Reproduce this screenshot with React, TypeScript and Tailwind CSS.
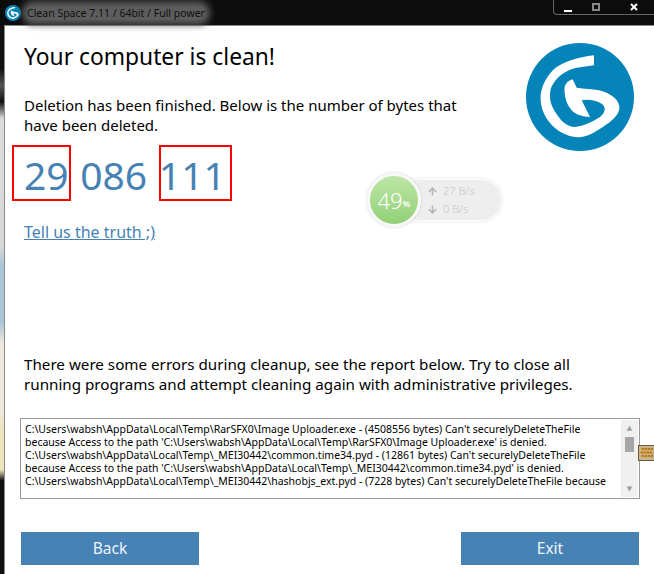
import { ArrowDown, ArrowUp } from "lucide-react";

const font = "font-['Noto_Sans','DejaVu_Sans',sans-serif]";

function Logo({ className }: { className: string }) {
  return (
    <svg viewBox="0 0 108 108" className={className}>
      <circle cx="54" cy="54" r="54" fill="#0484b8" />
      <path
        d="M68 12.3 C52 14 36 19 27 27 C18 37 14 47 14.7 57 C15 68 21 78 29 85 C36 91 46 95 55.7 94 C64 93 74 86 84 79 C90 74 94 69 93.3 63 C92 55 83 50 74 47.5 C66 45.5 58 46 50.7 44.7 L46.7 36.3 C41 38 38 42 38.5 48 C39 57 42 63 45.7 67.3 C50 72 57 74 64 74 L55.7 57.3 C62 56 70 57 75.7 60.7 C80 64 80 69 74 74 C68 78 56 84 47.3 84 C41 83 35 78 32 73 C27 66 24 60 24 54 C24 47 25 44 27.3 40.7 C31 34 40 27 50.7 24.7 L68 22.3 Z"
        fill="#fff"
      />
    </svg>
  );
}

function SpeedWidget() {
  return (
    <div className="absolute left-[367px] top-[173px] flex items-center">
      <div className="z-10 flex h-[54px] w-[54px] items-center justify-center rounded-full border-[3px] border-[#f8f8f8] bg-gradient-to-b from-[#bde6a6] to-[#92d077] text-white shadow-[0_0_3px_#ccc]">
        <span className="text-[22px] font-light leading-none">49</span>
        <span className="mt-[6px] text-[9px] font-semibold leading-none">%</span>
      </div>
      <div className="-ml-4 flex h-[44px] w-[98px] flex-col justify-center gap-1 rounded-r-full border-2 border-[#f9f9f9] bg-[#eeeeee] pl-5 text-[11px] font-light leading-[14px] text-[#c6c6c6] shadow-[0_0_2px_#ddd]">
        <div className="flex items-center gap-[5px]">
          <ArrowUp className="h-[11px] w-[11px] text-[#b5b5b5]" strokeWidth={3.5} />
          27 B/s
        </div>
        <div className="flex items-center gap-[5px]">
          <ArrowDown className="h-[11px] w-[11px] text-[#b5b5b5]" strokeWidth={3.5} />
          0 B/s
        </div>
      </div>
    </div>
  );
}

function KeyboardIcon() {
  return (
    <svg viewBox="0 0 16 16" className="absolute left-[638px] top-[445px] h-4 w-4">
      <rect x="0.5" y="0.5" width="16" height="15" fill="#c8b48c" stroke="#6e5a3c" />
      <path d="M3 3h12v2h-12z M2 6.5h13v2h-13z M3 10h12v2h-12z" fill="#e09a28" />
      <path d="M5 3v2 M8 3v2 M11 3v2 M14 3v2 M4 6.5v2 M7 6.5v2 M10 6.5v2 M13 6.5v2 M5 10v2 M8 10v2 M11 10v2 M14 10v2" stroke="#7a5a22" />
    </svg>
  );
}

export default function App() {
  return (
    <div className={`relative h-[574px] w-[654px] overflow-hidden bg-[#0c0c0c] ${font}`}>
      {/* title bar */}
      <div className="relative flex h-[25px] items-center pl-[5px]">
        <Logo className="h-4 w-4" />
        <div className="ml-[6px] rounded-md bg-[#5c5c5c] text-[10.5px] leading-[14px] text-[#111] shadow-[0_0_7px_5px_#5c5c5c]">
          Clean Space 7.11 / 64bit / Full power
        </div>
        <div className="absolute right-0 top-0 flex h-[15px] w-[101px] items-center rounded-bl-sm border-b border-l border-[#666]">
          <div className="ml-[10px] mt-2 h-[2px] w-2 bg-white" />
          <div className="ml-[20px] h-2 w-2 border-2 border-[#888]" />
          <svg viewBox="0 0 8 8" className="ml-[30px] h-2 w-2">
            <path d="M1 1 L7 7 M7 1 L1 7" stroke="#fff" strokeWidth="2" />
          </svg>
        </div>
      </div>

      <div className="flex h-[549px]">
        {/* desktop showing through the glass frame */}
        <div className="h-full w-[4px] bg-[linear-gradient(to_bottom,#111_0,#111_8%,#555_11%,#111_14%,#dcdcdc_17%,#d8d8d8_40%,#a8c4d8_44%,#a8c4d8_54%,#efe8de_58%,#efe8de_70%,#efe4bc_74%,#efe4bc_81%,#111_83%,#111_100%)]" />

        {/* window body */}
        <div className="flex flex-1 flex-col border-t border-l border-[#888] bg-white pl-[19px] text-black">
          <h1 className="mt-[16px] text-[22.8px] font-normal leading-[30px]">Your computer is clean!</h1>
          <p className="mt-[23px] w-[450px] text-[15px] leading-[20px]">
            Deletion has been finished. Below is the number of bytes that have been deleted.
          </p>
          <div className="mt-[14px] text-[39px] leading-[52px] text-[#4682b4] [word-spacing:1.5px]">29 086 111</div>
          <a className="mt-[21px] w-fit text-[16px] leading-[20px] text-[#4682b4] underline">Tell us the truth ;)</a>
          <p className="mt-[112px] w-[600px] text-[15.2px] leading-[20px]">
            There were some errors during cleanup, see the report below. Try to close all running programs and attempt cleaning again with administrative privileges.
          </p>
          <div className="mt-[24px] -ml-[4px] flex h-[81px] w-[620px] border border-[#9a9a9a] p-[1px] pl-[4px]">
            <div className="mt-[3px] flex-1 overflow-hidden pr-3 text-[10.5px] leading-[13px]">
              C:\Users\wabsh\AppData\Local\Temp\RarSFX0\Image Uploader.exe - (4508556 bytes) Can't securelyDeleteTheFile because Access to the path 'C:\Users\wabsh\AppData\Local\Temp\RarSFX0\Image Uploader.exe' is denied.
              <br />
              C:\Users\wabsh\AppData\Local\Temp\_MEI30442\common.time34.pyd - (12861 bytes) Can't securelyDeleteTheFile because Access to the path 'C:\Users\wabsh\AppData\Local\Temp\_MEI30442\common.time34.pyd' is denied.
              <br />
              C:\Users\wabsh\AppData\Local\Temp\_MEI30442\hashobjs_ext.pyd - (7228 bytes) Can't securelyDeleteTheFile because
            </div>
            <div className="flex w-[17px] flex-col items-center bg-[#f0f0f0] py-1 text-[7px] leading-[8px] text-[#a0a0a0]">
              <span>▲</span>
              <div className="mt-[5px] h-[15px] w-[9px] bg-[#a6a6a6]" />
              <span className="mt-auto">▼</span>
            </div>
          </div>
          <div className="mt-[33px] -ml-[3px] flex w-[618px] justify-between">
            <button className="h-[33px] w-[178px] bg-[#4682b4] text-[15.5px] text-[#eef4fa]">Back</button>
            <button className="h-[33px] w-[178px] bg-[#4682b4] text-[15.5px] text-[#eef4fa]">Exit</button>
          </div>
        </div>
      </div>

      {/* logo */}
      <Logo className="absolute left-[526px] top-[43px] h-[108px] w-[108px]" />

      {/* red markers from the screenshot annotation */}
      <div className="absolute left-[12px] top-[145px] h-[56px] w-[59px] border-2 border-[#f00]" />
      <div className="absolute left-[159px] top-[145px] h-[56px] w-[73px] border-2 border-[#f00]" />

      <SpeedWidget />
      <KeyboardIcon />
    </div>
  );
}
